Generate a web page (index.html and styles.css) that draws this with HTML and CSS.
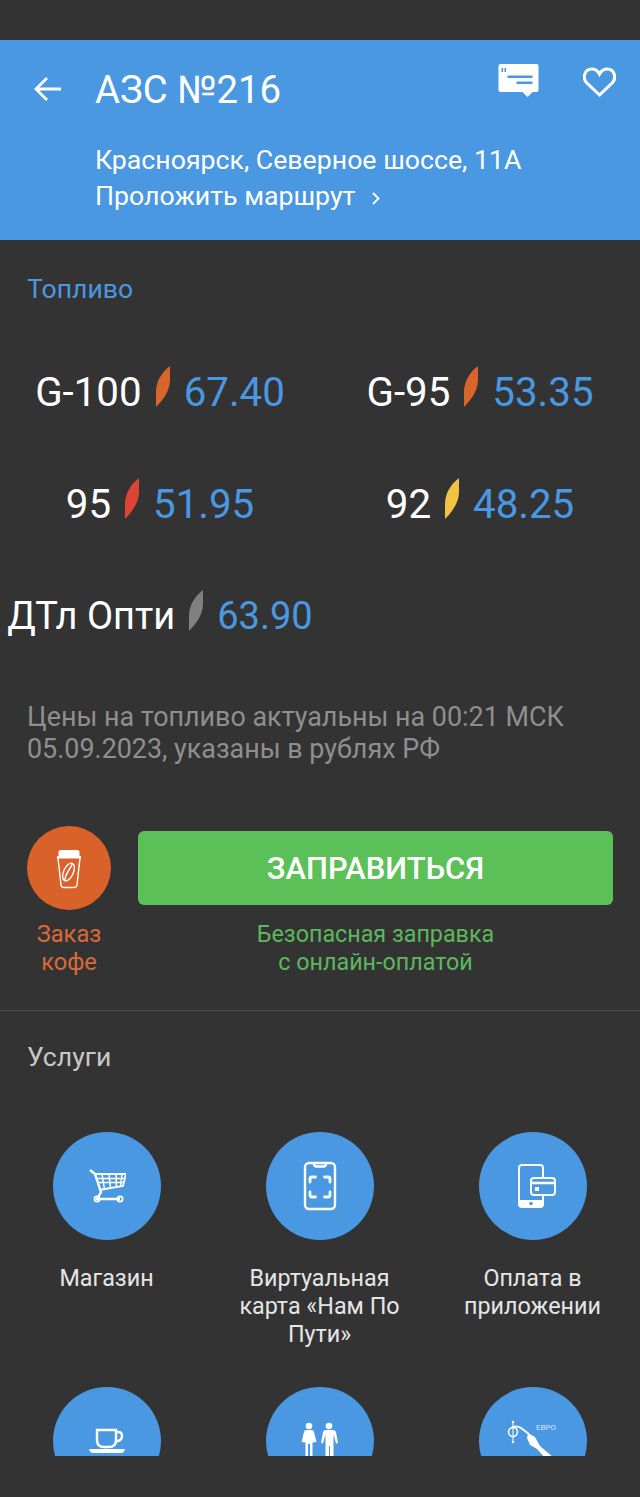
FILE: index.html
```html
<!DOCTYPE html>
<html lang="ru">
  <head>
    <meta charset="UTF-8" />
    <meta name="viewport" content="width=device-width, initial-scale=1.0" />
    <title>АЗС №216</title>
    <link rel="stylesheet" href="styles.css">
  </head>
  <body>
    <div class="screen">
      <header class="header">
        <div class="header-top">
          <svg class="back" viewBox="0 0 28 26" fill="none" stroke="#fff" stroke-width="2.800">
            <path d="M28 13H3M14 2 3 13l11 11" />
          </svg>
          <h1>АЗС №216</h1>
          <svg class="chat" viewBox="0 0 40 33">
            <path fill="#fff" fill-rule="evenodd" d="M2 0h36a2 2 0 0 1 2 2v24a2 2 0 0 1-2 2h-4l-5 5-5-5H2a2 2 0 0 1-2-2V2a2 2 0 0 1 2-2ZM3 4v4h1.600V4ZM6 4v4h1.600V4ZM9 11.500V14h25v-2.500ZM18 17.500V20h16v-2.500Z" />
          </svg>
          <svg class="heart" viewBox="0 0 30 30" preserveAspectRatio="none" fill="none" stroke="#fff" stroke-width="2.800">
            <path d="M15 28 3.500 16C-1 11 1.500 2 8 2c3.500 0 5.500 2 7 5 1.500-3 3.500-5 7-5 6.500 0 9 9 4.500 14Z" />
          </svg>
        </div>
        <p class="address">Красноярск, Северное шоссе, 11А</p>
        <p class="route">Проложить маршрут
          <svg class="route-arrow" viewBox="0 0 8 13" fill="none" stroke="#fff" stroke-width="1.800"><path d="M1 1l5.500 5.500L1 12" /></svg>
        </p>
      </header>

      <section class="fuel">
        <h2 class="fuel-title">Топливо</h2>
        <div class="fuel-grid">
          <div class="fuel-item">
            <span class="fuel-name">G-100</span>
            <svg class="drop" viewBox="0 0 14 41"><path fill="#d9652a" d="M14 0C6 6 0 15 0 26v15c3-3 14-14 14-27Z" /></svg>
            <span class="fuel-price">67.40</span>
          </div>
          <div class="fuel-item">
            <span class="fuel-name">G-95</span>
            <svg class="drop" viewBox="0 0 14 41"><path fill="#d9652a" d="M14 0C6 6 0 15 0 26v15c3-3 14-14 14-27Z" /></svg>
            <span class="fuel-price">53.35</span>
          </div>
          <div class="fuel-item">
            <span class="fuel-name">95</span>
            <svg class="drop" viewBox="0 0 14 41"><path fill="#dd4436" d="M14 0C6 6 0 15 0 26v15c3-3 14-14 14-27Z" /></svg>
            <span class="fuel-price">51.95</span>
          </div>
          <div class="fuel-item">
            <span class="fuel-name">92</span>
            <svg class="drop" viewBox="0 0 14 41"><path fill="#f2c244" d="M14 0C6 6 0 15 0 26v15c3-3 14-14 14-27Z" /></svg>
            <span class="fuel-price">48.25</span>
          </div>
          <div class="fuel-item fuel-item-small">
            <span class="fuel-name">ДТл Опти</span>
            <svg class="drop" viewBox="0 0 14 41"><path fill="#808080" d="M14 0C6 6 0 15 0 26v15c3-3 14-14 14-27Z" /></svg>
            <span class="fuel-price">63.90</span>
          </div>
        </div>
        <p class="fuel-note">Цены на топливо актуальны на 00:21 МСК 05.09.2023, указаны в рублях РФ</p>
      </section>

      <section class="actions">
        <div class="coffee">
          <div class="coffee-icon">
            <svg viewBox="0 0 28 42" fill="none" stroke="#fff" stroke-width="1.400">
              <path fill="#fff" stroke="none" d="M3.500 9V5q0-2 3-2h15q3 0 3 2v4h1.500v2.500H2V9Z" />
              <path d="M3 11l3 27q.3 2.500 3 2.500h10q2.700 0 3-2.500l3-27" />
              <ellipse cx="13.500" cy="25" rx="4.800" ry="9.500" transform="rotate(24 13.500 25)" />
              <path d="M17 17c-1 5-7 9-7 16" />
            </svg>
          </div>
          <p class="coffee-label">Заказ<br>кофе</p>
        </div>
        <div class="refuel">
          <button class="refuel-button" type="button">ЗАПРАВИТЬСЯ</button>
          <p class="refuel-label">Безопасная заправка<br>с онлайн-оплатой</p>
        </div>
      </section>

      <section class="services">
        <h2 class="services-title">Услуги</h2>
        <div class="services-grid">
          <div class="service">
            <div class="service-icon">
              <svg viewBox="0 0 38 36" width="38" height="36" fill="none" stroke="#fff" stroke-width="1.500">
                <path stroke-width="2.400" d="M2 2l5 4 6 18-4 7h23" />
                <path stroke-width="1.800" d="M7 6h31l-3 12-24 4" />
                <path d="M8.500 10.500h28M10 14.500h26M14 6l2.500 15.500M21 6l1.500 14.500M28 6l.5 13.500M34 6l-1.500 12.500" />
                <circle cx="9" cy="31" r="2.600" stroke-width="1.800" />
                <circle cx="32" cy="31" r="2.600" stroke-width="1.800" />
              </svg>
            </div>
            <p class="service-name">Магазин</p>
          </div>
          <div class="service">
            <div class="service-icon">
              <svg viewBox="0 0 34 50" width="34" height="50" fill="none" stroke="#fff" stroke-width="2.400" stroke-linecap="round">
                <rect x="2" y="2" width="30" height="46" rx="4" />
                <path d="M11 2.500q0 3 2.500 3h7q2.500 0 2.500-3" />
                <path d="M7 21v-3q0-2 2-2h3.500M21.500 16H25q2 0 2 2v3M27 31v3q0 2-2 2h-3.500M12.500 36H9q-2 0-2-2v-3" stroke-width="2.800" />
              </svg>
            </div>
            <p class="service-name">Виртуальная карта «Нам По Пути»</p>
          </div>
          <div class="service">
            <div class="service-icon">
              <svg class="pay-icon" viewBox="0 0 38 44" width="38" height="44" fill="none" stroke="#fff" stroke-width="2">
                <path d="M25 13V4q0-3-3-3H4Q1 1 1 4v36q0 3 3 3h18q3 0 3-3v-9" />
                <path fill="#fff" stroke="none" d="M1 36h24v4q0 3-3 3H4q-3 0-3-3Z" />
                <circle cx="13" cy="39.500" r="1.800" fill="#4a98e2" stroke="none" />
                <rect x="13" y="14" width="24" height="17" rx="3" />
                <path d="M13 19h24" stroke-width="2.400" />
                <rect x="17" y="23" width="4" height="4" fill="#fff" stroke="none" />
              </svg>
            </div>
            <p class="service-name">Оплата в приложении</p>
          </div>
          <div class="service">
            <div class="service-icon">
              <svg viewBox="0 0 36 26" width="36" height="26" fill="none" stroke="#fff" stroke-width="2.400">
                <path d="M8 2h19v10q0 7-7 7h-5q-7 0-7-7ZM27 4h2q4 0 4 4t-4 5l-3 1" />
                <path fill="#fff" stroke="none" d="M0 21h36q-1 4-4 4H4q-3 0-4-4Z" />
              </svg>
            </div>
          </div>
          <div class="service">
            <div class="service-icon">
              <svg viewBox="0 0 40 42" width="40" height="42" fill="#fff">
                <circle cx="9" cy="6" r="3.300" />
                <path d="M6 10h6q1.500 0 2 2l2.500 10-4 .5V42H10V24H8v18H5.500V22.500L1.500 22 4 12q.5-2 2-2Z" />
                <circle cx="29" cy="6" r="3.300" />
                <path d="M25 10h8q2 0 3 2l2 11-2 .5-2.500-9V42H30V26h-1v16h-3.500V14.500l-2.500 9-2-.5 2-11q.8-2 2-2Z" />
              </svg>
            </div>
          </div>
          <div class="service">
            <div class="service-icon">
              <svg class="pump-icon" viewBox="0 0 70 44" width="70" height="44" fill="none" stroke="#fff">
                <circle cx="6" cy="13" r="4.500" stroke-width="1.600" />
                <path d="M6 3v20" stroke-width="1" />
                <circle cx="6" cy="3" r="1.200" fill="#fff" stroke="none" />
                <circle cx="6" cy="23" r="1.200" fill="#fff" stroke="none" />
                <path d="M4 9q5-3 10 0l8 6" stroke-width="2" />
                <path fill="#fff" stroke="none" d="M21 14l7 4 5 9 14 12h-9l-8-9-7-4-3-7Z" />
                <text class="pump-text" x="29" y="11">ЕВРО</text>
              </svg>
            </div>
          </div>
        </div>
      </section>
    </div>
  </body>
</html>
```

FILE: styles.css
```css
* {
  box-sizing: border-box;
}

body {
  font-family: Roboto, sans-serif;
  margin: 0;
  background-color: #333333;
}

p,
h1,
h2 {
  margin: 0;
  font-weight: normal;
}

.screen {
  height: 1416px;
  margin-top: 40px;
  overflow: hidden;
}

.header {
  height: 200px;
  padding: 0 0 0 95px;
  background-color: #4a98e2;
  color: white;
  font-size: 26.700px;
  line-height: 37px;
}

.header-top {
  display: flex;
  align-items: flex-start;
  height: 102px;
  position: relative;
}

h1 {
  font-size: 38.300px;
  line-height: 42px;
  margin-top: 29px;
}

.back {
  position: absolute;
  left: -62px;
  top: 36px;
  width: 28px;
  height: 26px;
}

.chat {
  position: absolute;
  left: 403px;
  top: 24px;
  width: 41px;
  height: 33px;
}

.heart {
  position: absolute;
  left: 488px;
  top: 27px;
  width: 33px;
  height: 30px;
}

.route {
  margin-top: -1px;
}

.route-arrow {
  width: 8px;
  height: 13px;
  margin-left: 10px;
}

.fuel {
  padding-top: 34px;
}

.fuel-title {
  font-size: 26.600px;
  line-height: 30px;
  color: #4a98e2;
  padding-left: 27px;
}

.fuel-grid {
  display: grid;
  grid-template-columns: 320px 320px;
  grid-auto-rows: 112px;
  margin-top: 60px;
}

.fuel-item {
  display: flex;
  align-items: center;
  justify-content: center;
  height: 56px;
  font-size: 40.300px;
  color: white;
  white-space: nowrap;
}

.fuel-item-small {
  font-size: 38px;
}

.drop {
  width: 14px;
  height: 41px;
  margin: 0 14px 12px 14px;
  flex-shrink: 0;
}

.fuel-price {
  color: #4a98e2;
}

.fuel-note {
  margin: 1px 27px 0;
  font-size: 26.900px;
  line-height: 32px;
  color: #8f8f8f;
}

.actions {
  display: flex;
  align-items: flex-start;
  padding: 61px 27px 34px;
  border-bottom: 1px solid #4a4a4a;
}

.coffee {
  width: 84px;
  flex-shrink: 0;
  text-align: center;
}

.coffee-icon {
  display: flex;
  align-items: center;
  justify-content: center;
  width: 84px;
  height: 84px;
  border-radius: 50%;
  background-color: #d9622b;
}

.coffee-icon svg {
  width: 28px;
  height: 42px;
}

.coffee-label {
  margin-top: 10px;
  font-size: 23.600px;
  line-height: 28px;
  color: #d96a36;
}

.refuel {
  flex: 1;
  margin-left: 27px;
  padding-top: 5px;
  text-align: center;
}

.refuel-button {
  display: block;
  width: 100%;
  height: 74px;
  padding-top: 2px;
  background-color: #5cc059;
  color: white;
  border: none;
  border-radius: 6px;
  font-family: Roboto, sans-serif;
  font-size: 30.900px;
  font-weight: 500;
}

.refuel-label {
  margin-top: 15px;
  font-size: 23.300px;
  line-height: 28px;
  color: #5cb85c;
}

.services {
  padding-top: 29px;
}

.services-title {
  font-size: 26.600px;
  line-height: 34px;
  color: #c8c8c8;
  padding-left: 27px;
}

.services-grid {
  display: grid;
  grid-template-columns: repeat(3, 213px);
  grid-auto-rows: 255px;
  margin-top: 58px;
}

.service {
  display: flex;
  flex-direction: column;
  align-items: center;
  text-align: center;
}

.service-icon {
  display: flex;
  align-items: center;
  justify-content: center;
  width: 108px;
  height: 108px;
  border-radius: 50%;
  background-color: #4a98e2;
  flex-shrink: 0;
  overflow: hidden;
}

.service-name {
  margin-top: 24px;
  padding: 0 20px;
  font-size: 23.300px;
  line-height: 28px;
  color: #e6e6e6;
}

.pay-icon {
  margin-left: 8px;
}

.pump-icon {
  margin-left: 18px;
  flex-shrink: 0;
}

.pump-text {
  fill: #d8e8f8;
  stroke: none;
  font-size: 8px;
}
```
